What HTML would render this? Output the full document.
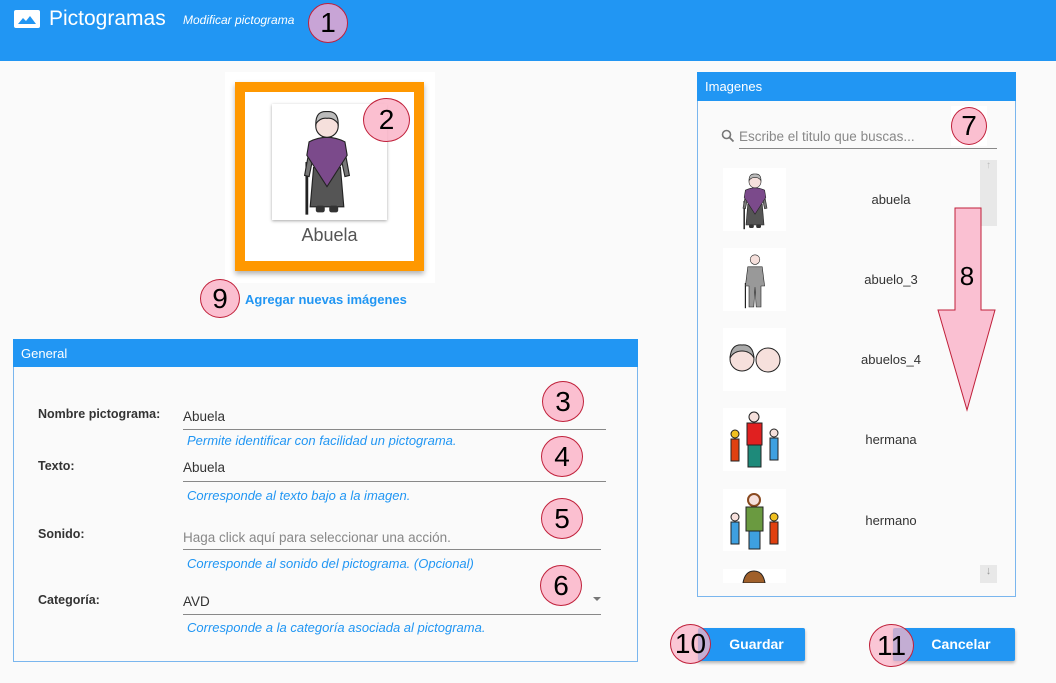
<!DOCTYPE html>
<html><head><meta charset="utf-8"><style>
*{margin:0;padding:0;box-sizing:border-box}
body{width:1056px;height:683px;background:#fafafa;font-family:"Liberation Sans",Arial,sans-serif;position:relative;overflow:hidden}
.a{position:absolute}
.hdr{left:0;top:0;width:1056px;height:61px;background:#2196f3}
.circ{position:absolute;border-radius:50%;background:rgba(250,180,200,.85);border:1px solid #c0203a;color:#000;text-align:center;font-size:28px;font-family:"Liberation Sans",sans-serif}
.lbl{font-size:12.5px;font-weight:bold;color:#333}
.val{font-size:13.5px;color:#333}
.line{height:1px;background:#888}
.help{font-size:13px;font-style:italic;color:#2196f3}
.item{font-size:13px;color:#333;text-align:center;width:120px}
.btn{background:#2196f3;color:#fff;font-weight:bold;font-size:14px;text-align:center;line-height:33px;border-radius:2px;box-shadow:0 2px 3px rgba(0,0,0,.3)}
.thumb{background:#fff}
</style></head><body>
<svg width="0" height="0" style="position:absolute">
<defs>
<symbol id="gma" viewBox="0 0 60 100">
<line x1="12" y1="50" x2="12" y2="97" stroke="#222" stroke-width="2.5"/>
<path d="M14 40 L10 62 L14 63 L18 44Z" fill="#777" stroke="#222" stroke-width="1"/>
<path d="M46 40 L50 62 L46 63 L42 44Z" fill="#777" stroke="#222" stroke-width="1"/>
<path d="M18 55 L15 90 L45 90 L42 55Z" fill="#555" stroke="#222" stroke-width="1"/>
<path d="M14 32 Q30 24 46 32 L48 44 L30 72 L12 44Z" fill="#7b4a8b" stroke="#222" stroke-width="1"/>
<circle cx="30" cy="18" r="10" fill="#f6e0dc" stroke="#222" stroke-width="1"/>
<path d="M20 16 Q20 4 30 5 Q40 4 40 16 Q36 10 30 11 Q24 10 20 16Z" fill="#bbb" stroke="#222" stroke-width="1"/>
<rect x="20" y="89" width="8" height="6" rx="2" fill="#333"/><rect x="32" y="89" width="8" height="6" rx="2" fill="#333"/>
</symbol>
<symbol id="gpa" viewBox="0 0 60 100">
<line x1="14" y1="55" x2="14" y2="97" stroke="#222" stroke-width="2"/>
<path d="M18 28 L42 28 L46 60 L40 60 L40 95 L32 95 L30 62 L28 95 L20 95 L20 60 L14 60Z" fill="#999" stroke="#222" stroke-width="1"/>
<circle cx="30" cy="16" r="8" fill="#f6e0dc" stroke="#222" stroke-width="1"/>
</symbol>
</defs></svg>

<div class="a hdr"></div>
<svg class="a" style="left:14px;top:10px" width="26" height="18" viewBox="0 0 26 18"><rect width="26" height="18" rx="2" fill="#fff"/><path d="M4 14 L9 8 L12 11 L16 6 L22 14Z" fill="#2196f3"/></svg>
<div class="a" style="left:49px;top:7px;color:#fff;font-size:21px">Pictogramas</div>
<div class="a" style="left:183px;top:13px;color:#fff;font-size:12px;font-style:italic">Modificar pictograma</div>
<div class="circ" style="left:308px;top:3px;width:40px;height:40px;line-height:38px;background:#c8a4d6">1</div>

<div class="a" style="left:225px;top:72px;width:210px;height:211px;background:#fff"></div>
<div class="a" style="left:235px;top:82px;width:189px;height:189px;border:10px solid #ff9800;background:#fff;box-shadow:0 3px 5px rgba(0,0,0,.3)"></div>
<div class="a" style="left:272px;top:104px;width:115px;height:116px;background:#fff;box-shadow:0 1px 3px rgba(0,0,0,.35)"><svg width="115" height="116"><use href="#gma" x="20" y="2" width="70" height="112"/></svg></div>
<div class="a" style="left:235px;top:225px;width:189px;text-align:center;font-size:18px;color:#555">Abuela</div>
<div class="circ" style="left:363px;top:98px;width:47px;height:44px;line-height:42px">2</div>
<div class="circ" style="left:200px;top:279px;width:40px;height:39px;line-height:37px">9</div>
<div class="a" style="left:245px;top:292px;color:#2196f3;font-weight:bold;font-size:13px">Agregar nuevas imágenes</div>

<div class="a" style="left:13px;top:339px;width:625px;height:323px;border:1px solid #7ab6ee"></div>
<div class="a" style="left:13px;top:339px;width:625px;height:28px;background:#2196f3;color:#fff;font-size:13px;padding:7px 8px">General</div>

<div class="a lbl" style="left:38px;top:407px">Nombre pictograma:</div>
<div class="a val" style="left:183px;top:409px">Abuela</div>
<div class="a line" style="left:183px;top:429px;width:423px"></div>
<div class="a help" style="left:187px;top:433px">Permite identificar con facilidad un pictograma.</div>

<div class="a lbl" style="left:38px;top:459px">Texto:</div>
<div class="a val" style="left:183px;top:460px">Abuela</div>
<div class="a line" style="left:183px;top:481px;width:423px"></div>
<div class="a help" style="left:187px;top:488px">Corresponde al texto bajo a la imagen.</div>

<div class="a lbl" style="left:38px;top:527px">Sonido:</div>
<div class="a val" style="left:183px;top:530px;color:#888">Haga click aquí para seleccionar una acción.</div>
<div class="a line" style="left:183px;top:549px;width:418px"></div>
<div class="a help" style="left:187px;top:556px">Corresponde al sonido del pictograma. (Opcional)</div>

<div class="a lbl" style="left:38px;top:593px">Categoría:</div>
<div class="a val" style="left:183px;top:594px">AVD</div>
<div class="a" style="left:593px;top:597px;width:0;height:0;border-left:4px solid transparent;border-right:4px solid transparent;border-top:4px solid #777"></div>
<div class="a line" style="left:183px;top:614px;width:418px"></div>
<div class="a help" style="left:187px;top:620px">Corresponde a la categoría asociada al pictograma.</div>

<div class="circ" style="left:542px;top:381px;width:42px;height:41px;line-height:39px">3</div>
<div class="circ" style="left:541px;top:436px;width:42px;height:41px;line-height:39px">4</div>
<div class="circ" style="left:541px;top:498px;width:42px;height:41px;line-height:39px">5</div>
<div class="circ" style="left:540px;top:565px;width:42px;height:41px;line-height:39px">6</div>

<div class="a" style="left:697px;top:72px;width:319px;height:525px;border:1px solid #7ab6ee"></div>
<div class="a" style="left:697px;top:72px;width:319px;height:29px;background:#2196f3;color:#fff;font-size:13px;padding:7px 8px">Imagenes</div>
<svg class="a" style="left:721px;top:129px" width="14" height="14" viewBox="0 0 14 14"><circle cx="5.5" cy="5.5" r="4" fill="none" stroke="#777" stroke-width="1.6"/><line x1="8.5" y1="8.5" x2="12.5" y2="12.5" stroke="#777" stroke-width="1.8"/></svg>
<div class="a" style="left:739px;top:129px;font-size:13.5px;color:#888">Escribe el titulo que buscas...</div>
<div class="a line" style="left:739px;top:148px;width:258px"></div>
<div class="a" style="left:951px;top:106px;width:36px;height:40px;background:#fff"></div>
<div class="circ" style="left:951px;top:107px;width:36px;height:38px;line-height:36px">7</div>

<div class="a" style="left:980px;top:160px;width:17px;height:66px;background:#e8e8e8;color:#bbb;font-size:10px;text-align:center">↑</div>
<div class="a" style="left:980px;top:565px;width:17px;height:18px;background:#e8e8e8;color:#999;font-size:11px;text-align:center">↓</div>

<div class="a thumb" style="left:723px;top:168px;width:63px;height:63px"><svg width="63" height="63"><use href="#gma" x="12" y="3" width="40" height="60"/></svg></div>
<div class="a item" style="left:831px;top:192px">abuela</div>
<div class="a thumb" style="left:723px;top:248px;width:63px;height:63px"><svg width="63" height="63"><use href="#gpa" x="12" y="2" width="40" height="60"/></svg></div>
<div class="a item" style="left:831px;top:272px">abuelo_3</div>
<div class="a thumb" style="left:723px;top:328px;width:63px;height:63px"><svg width="63" height="63"><circle cx="19" cy="31" r="12" fill="#f6e0dc" stroke="#222"/><path d="M7 30 Q8 16 19 17 Q30 16 31 30 Q27 23 19 23 Q11 23 7 30Z" fill="#aaa" stroke="#222"/><circle cx="45" cy="32" r="12" fill="#f6e0dc" stroke="#222"/></svg></div>
<div class="a item" style="left:831px;top:352px">abuelos_4</div>
<div class="a thumb" style="left:723px;top:408px;width:63px;height:63px"><svg width="63" height="63"><circle cx="31" cy="9" r="5" fill="#f6e0dc" stroke="#222"/><rect x="24" y="15" width="15" height="22" fill="#e02020" stroke="#222"/><rect x="25" y="37" width="13" height="22" fill="#1e8a7a" stroke="#222"/><circle cx="12" cy="26" r="4" fill="#f0c020" stroke="#222"/><rect x="8" y="31" width="8" height="22" fill="#e04010" stroke="#222"/><circle cx="51" cy="25" r="4" fill="#f6e0dc" stroke="#222"/><rect x="47" y="30" width="8" height="22" fill="#3ea0e0" stroke="#222"/></svg></div>
<div class="a item" style="left:831px;top:432px">hermana</div>
<div class="a thumb" style="left:723px;top:489px;width:63px;height:62px"><svg width="63" height="62"><circle cx="31" cy="11" r="6" fill="#f6e0dc" stroke="#8a4a20" stroke-width="2"/><rect x="23" y="18" width="17" height="24" fill="#6a9a40" stroke="#222"/><rect x="26" y="42" width="11" height="18" fill="#3ea0e0" stroke="#222"/><circle cx="12" cy="28" r="4" fill="#f6e0dc" stroke="#222"/><rect x="8" y="33" width="8" height="22" fill="#3ea0e0" stroke="#222"/><circle cx="51" cy="28" r="4" fill="#f0c020" stroke="#222"/><rect x="47" y="33" width="8" height="22" fill="#e04010" stroke="#222"/></svg></div>
<div class="a item" style="left:831px;top:513px">hermano</div>
<div class="a thumb" style="left:723px;top:569px;width:63px;height:14px"><svg width="63" height="14"><path d="M20 14 Q22 2 31 2 Q40 2 42 14Z" fill="#a0602a" stroke="#222"/></svg></div>

<svg class="a" style="left:936px;top:206px" width="62" height="208" viewBox="0 0 62 208"><path d="M19 2 L45 2 L45 104 L59 104 L31 204 L2 104 L19 104Z" fill="rgba(250,185,205,.9)" stroke="#c0203a" stroke-width="1"/><text x="31" y="79" text-anchor="middle" font-family="Liberation Sans,sans-serif" font-size="26">8</text></svg>

<div class="a btn" style="left:698px;top:628px;width:107px;height:33px;padding-left:10px">Guardar</div>
<div class="a btn" style="left:893px;top:628px;width:122px;height:33px;padding-left:14px">Cancelar</div>
<div class="circ" style="left:670px;top:624px;width:41px;height:40px;line-height:38px;background:rgba(250,180,200,.75)">10</div>
<div class="circ" style="left:869px;top:624px;width:45px;height:43px;line-height:41px;background:rgba(250,180,200,.75)">11</div>
</body></html>
